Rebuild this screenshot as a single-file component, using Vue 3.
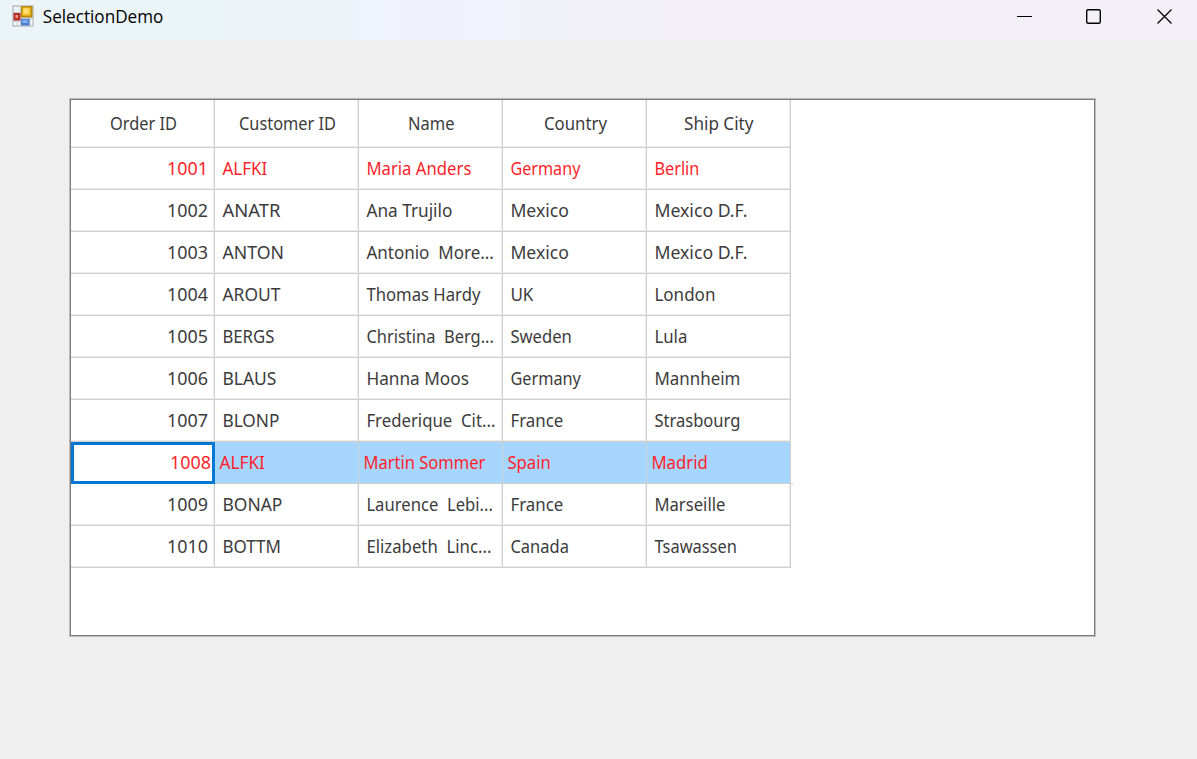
<script setup>
const headers = [
  ['Order ID', 67], ['Customer ID', 97], ['Name', 46.5], ['Country', 63], ['Ship City', 69.5],
]
const rows = [
  ['1001', ['ALFKI', 45], ['Maria Anders', 105], ['Germany', 70], ['Berlin', 45]],
  ['1002', ['ANATR', 58], ['Ana Trujilo', 86], ['Mexico', 58.5], ['Mexico D.F.', 93]],
  ['1003', ['ANTON', 61.5], ['Antonio  More...', 127.5], ['Mexico', 58.5], ['Mexico D.F.', 93]],
  ['1004', ['AROUT', 58], ['Thomas Hardy', 114], ['UK', 23], ['London', 61]],
  ['1005', ['BERGS', 52], ['Christina  Berg...', 127.5], ['Sweden', 61.5], ['Lula', 33]],
  ['1006', ['BLAUS', 54], ['Hanna Moos', 102.5], ['Germany', 70.5], ['Mannheim', 86]],
  ['1007', ['BLONP', 57], ['Frederique  Cit...', 129], ['France', 53], ['Strasbourg', 86]],
  ['1008', ['ALFKI', 45.5], ['Martin Sommer', 122], ['Spain', 43.5], ['Madrid', 56.5]],
  ['1009', ['BONAP', 60], ['Laurence  Lebi...', 126.5], ['France', 53], ['Marseille', 71]],
  ['1010', ['BOTTM', 58.5], ['Elizabeth  Linc...', 125], ['Canada', 58.5], ['Tsawassen', 82.5]],
]
</script>

<template>
  <div class="window">
    <header class="titlebar">
      <svg class="app-icon" width="22" height="22" viewBox="0 0 22 22">
        <rect width="22" height="22" rx="1" fill="#c9cccf" />
        <rect x="2" y="2" width="6" height="5" fill="#e8f1f6" />
        <rect x="1.500" y="8" width="7" height="7.500" fill="#b8302a" />
        <rect x="3.500" y="10" width="2.500" height="3" fill="#ec9a90" />
        <rect x="9" y="1" width="11.500" height="11.500" fill="#b98c10" />
        <rect x="10.500" y="2.500" width="8" height="8" fill="#f7c62d" />
        <rect x="11.500" y="3.500" width="5" height="5" fill="#fde07a" />
        <rect x="9" y="14" width="8.500" height="6.500" fill="#4e80d0" />
        <rect x="10.500" y="15" width="5" height="3" fill="#83aef0" />
        <rect x="2" y="17" width="2.500" height="3" fill="#f2f6f8" />
        <rect x="5.500" y="17" width="2.500" height="3" fill="#f2f6f8" />
        <rect x="18.500" y="14" width="1.800" height="6" fill="#f2f6f8" />
      </svg>
      <svg class="title" width="130" height="30"><text x="0.800" y="20" textLength="120.500" lengthAdjust="spacingAndGlyphs">SelectionDemo</text></svg>
      <svg class="controls" width="180" height="34" fill="none" stroke="#000" stroke-width="1.300">
        <path d="M0 16.500H15" stroke-width="1" />
        <rect x="69.700" y="9.700" width="13.600" height="13.600" rx="1.500" stroke-width="1.400" />
        <path d="M140.500 9.500L154.500 23.500M154.500 9.500L140.500 23.500" />
      </svg>
    </header>
    <main class="client">
      <section class="grid">
        <div class="row head">
          <div v-for="h in headers" :key="h[0]" class="cell">
            <svg :width="h[1]" height="26"><text x="0" y="19" :textLength="h[1]" lengthAdjust="spacingAndGlyphs">{{ h[0] }}</text></svg>
          </div>
        </div>
        <div v-for="r in rows" :key="r[0]" class="row" :class="{ red: r[1][0] === 'ALFKI', selected: r[0] === '1008' }">
          <div class="cell num">
            <svg width="41" height="26"><text x="0" y="19" textLength="41" lengthAdjust="spacingAndGlyphs">{{ r[0] }}</text></svg>
          </div>
          <div v-for="(c, i) in r.slice(1)" :key="i" class="cell">
            <svg :width="c[1]" height="26"><text x="-0.600" y="19" :textLength="c[1]" lengthAdjust="spacingAndGlyphs">{{ c[0] }}</text></svg>
          </div>
        </div>
      </section>
    </main>
  </div>
</template>

<style>
body { margin: 0; overflow: hidden; }
</style>

<style scoped>
.window { width: 1197px; height: 759px; background: #efefef; font-family: "Noto Sans", "Open Sans", sans-serif; overflow: hidden; display: flex; flex-direction: column; }
.titlebar { height: 41px; flex: none; display: flex; align-items: flex-start; background: linear-gradient(90deg, #ebf4f7 0, #ebf4f8 220px, #f0f2fb 430px, #f3f0f7 700px, #f3f0f7 100%); }
.app-icon { margin: 5px 0 0 12px; }
.title { margin: 3px 0 0 8px; font-family: "Open Sans", "Noto Sans", sans-serif; font-size: 17.5px; }
.controls { margin-left: auto; }
.client { padding: 58px 0 0 70px; }
.grid { box-sizing: border-box; width: 1025px; height: 537px; background: #fff; border: 1px solid #7b7b7b; box-shadow: 0 0 0 1px #bdbdbd; }
.row { display: grid; grid-template-columns: repeat(5, 144px); width: 720px; height: 42px; }
.head { height: 48px; }
.cell { box-sizing: border-box; border-right: 1px solid #cfcfcf; border-bottom: 1px solid #cfcfcf; box-shadow: inset -1px -1px 0 #ececec; display: flex; align-items: center; padding-left: 8px; }
.head .cell { justify-content: center; padding-left: 1px; }
.cell svg { display: block; overflow: visible; }
.cell text { font-size: 18.3px; fill: #3c3c3c; white-space: pre; }
.num { justify-content: flex-end; padding: 0 6px 0 0; }
.red text { fill: #ff1f2b; }
.selected { position: relative; }
.selected::after { content: ""; position: absolute; right: -2px; bottom: 0; width: 2px; height: 1px; background: #cfcfcf; }
.selected .cell { background: #a6d6ff; padding-left: 5px; box-shadow: none; }
.selected .num { background: #fff; border: 3px solid #0078d4; padding: 0 1px 0 0; }
</style>
